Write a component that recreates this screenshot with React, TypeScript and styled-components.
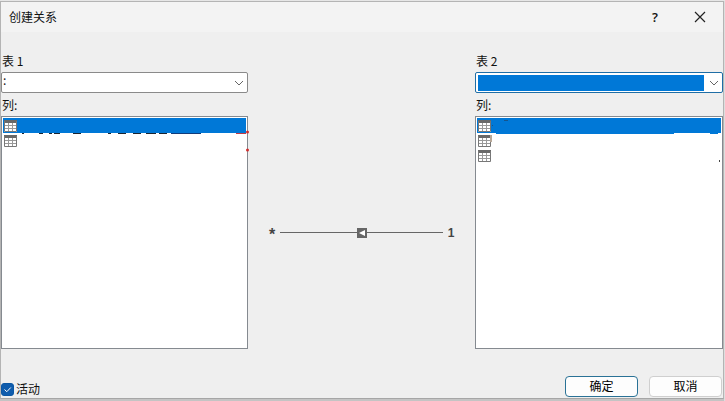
import React, { useState } from "react";
import styled, { createGlobalStyle } from "styled-components";

const GlobalStyle = createGlobalStyle`
  *, *::before, *::after { box-sizing: border-box; }
  body {
    margin: 0;
    background: #c4c4c4;
    color: #111;
    font: 12px/16px "Noto Sans CJK SC", sans-serif;
  }
`;

const Page = styled.div`
  display: flex;
  min-height: 100vh;
  padding: 1px 1px 2px 0;
  background: linear-gradient(#e6e6e6 0 1px, transparent 1px), linear-gradient(to left, #dedede 0 1px, transparent 1px);
`;

const Dialog = styled.form`
  flex: 1;
  display: flex;
  flex-direction: column;
  border: 1px solid #b4b4b4;
  border-bottom-color: #a6a6a6;
  background: #efefef;
`;

const TitleBar = styled.header`
  display: flex;
  align-items: center;
  height: 30px;
  padding: 0 8px;
  background: #f3f3f3;
`;

const Title = styled.h1`
  flex: 1;
  margin: 0;
  font: inherit;
`;

const TitleButton = styled.button`
  display: grid;
  place-items: center;
  width: 30px;
  height: 28px;
  margin-left: 15px;
  padding: 0;
  border: 0;
  background: none;
  color: #111;
  font: 600 13px/16px "Open Sans", sans-serif;
`;

const Columns = styled.main`
  flex: 1;
  display: grid;
  grid-template-columns: minmax(0, 1fr) 226px minmax(0, 1fr);
  padding-top: 20px;
`;

const Side = styled.section`
  display: flex;
  flex-direction: column;
  &:first-child { margin-right: 1px; }
`;

const FieldLabel = styled.label`
  display: block;
  height: 20px;
  padding: 0 1px;
  line-height: 18px;
`;

const ListLabel = styled.div`
  height: 23px;
  padding: 4px 1px 0;
`;

const Combo = styled.div<{ $active?: boolean }>`
  position: relative;
  height: 21px;
  border: 1px solid ${(p) => (p.$active ? "#1f6ea6" : "#8a8a8a")};
  border-radius: 2px;
  background: #fff;
  svg {
    position: absolute;
    right: 3px;
    top: 6px;
    pointer-events: none;
  }
`;

const Select = styled.select<{ $active?: boolean }>`
  display: block;
  appearance: none;
  width: 100%;
  height: 100%;
  padding: ${(p) => (p.$active ? "2px 18px 1px 2px" : "0 18px 5px 1px")};
  border: 0;
  outline: 0;
  border-radius: 2px;
  background: ${(p) => (p.$active ? "#0078d7" : "#fff")} content-box;
  color: #111;
  font: 12px/12px "Noto Sans CJK SC", sans-serif;
`;

const List = styled.ul`
  position: relative;
  flex: 1;
  margin: 0;
  padding: 1px;
  border: 1px solid #858a90;
  background: #fff;
  list-style: none;
`;

const Row = styled.li<{ $selected?: boolean }>`
  display: flex;
  align-items: center;
  height: 15px;
  padding: 1px 1px 0;
  background: ${(p) => (p.$selected ? "#0078d7" : "transparent")};
`;

const Marks = styled.svg`
  position: absolute;
  left: 0;
  top: 0;
  overflow: visible;
  pointer-events: none;
`;

const Relation = styled.div`
  align-self: center;
  display: flex;
  align-items: center;
  gap: 4px;
  margin-top: 64px;
  padding: 0 20px 0 19px;
  color: #444;
  font: bold 12px/16px "Liberation Sans", sans-serif;
`;

const Cardinality = styled.span<{ $many?: boolean }>`
  width: 8px;
  text-align: center;
  font-size: ${(p) => (p.$many ? "16px" : "12px")};
  padding-top: ${(p) => (p.$many ? "5px" : "0")};
`;

const Line = styled.div`
  flex: 1;
  display: flex;
  align-items: center;
  &::before, &::after {
    content: "";
    flex: 1;
    height: 1px;
    background: #666;
  }
`;

const Footer = styled.footer`
  display: flex;
  align-items: flex-end;
  height: 49px;
  padding-bottom: 1px;
`;

const CheckLabel = styled.label`
  flex: 1;
  display: flex;
  align-items: center;
  gap: 2px;
`;

const Check = styled.input`
  appearance: none;
  width: 13px;
  height: 13px;
  margin: 0;
  border: 1px solid #0b57a4;
  border-radius: 3px;
  background: #fff;
  &:checked {
    background: #0f5cad url("data:image/svg+xml,%3Csvg xmlns='http://www.w3.org/2000/svg' viewBox='0 0 11 11'%3E%3Cpath d='M2.5 5.5L4.8 7.7L8.8 3.5' fill='none' stroke='white' stroke-width='1'/%3E%3C/svg%3E") center / 11px 11px no-repeat;
  }
`;

const Button = styled.button<{ $primary?: boolean }>`
  width: 73px;
  height: 21px;
  margin-left: 11px;
  padding: 0 0 2px;
  border: 1px solid ${(p) => (p.$primary ? "#2a7296" : "#cfcfcf")};
  border-radius: 4px;
  background: #fdfdfd;
  color: #000;
  font: inherit;
  &:last-child { margin-right: 1px; }
`;

const Chevron = () => (
  <svg width="10" height="8" viewBox="0 0 10 8" fill="none" stroke="#666">
    <path d="M1 2L5 6L9 2" />
  </svg>
);

const TableIcon = () => (
  <svg width="13" height="12" viewBox="0 0 13 12">
    <path fill="#fff" d="M0 0H13V12H0Z" />
    <path fill="#686868" d="M0 0H13V3H0Z" />
    <path fill="none" stroke="#777" d="M.5 1V11.5H12.5V1" />
    <path fill="none" stroke="#999" d="M4.5 3V11M8.5 3V11M1 5.5H12M1 8.5H12" />
  </svg>
);

function ColumnList({ count, name, children }: { count: number; name: string; children: React.ReactNode }) {
  const [selected, setSelected] = useState(0);
  return (
    <List role="listbox" aria-label={name}>
      {Array.from({ length: count }, (_, i) => (
        <Row key={i} role="option" aria-selected={i === selected} $selected={i === selected} onClick={() => setSelected(i)}>
          <TableIcon />
        </Row>
      ))}
      {children}
    </List>
  );
}

export default function App() {
  return (
    <>
      <GlobalStyle />
      <Page>
        <Dialog onSubmit={(e) => e.preventDefault()}>
          <TitleBar>
            <Title>创建关系</Title>
            <TitleButton type="button">?</TitleButton>
            <TitleButton type="button" aria-label="关闭">
              <svg width="12" height="12" viewBox="0 0 12 12" stroke="#222" strokeWidth="1.2">
                <path d="M1 1L11 11M11 1L1 11" />
              </svg>
            </TitleButton>
          </TitleBar>
          <Columns>
            <Side>
              <FieldLabel htmlFor="table1">表 1</FieldLabel>
              <Combo>
                <Select id="table1">
                  <option>:</option>
                </Select>
                <Chevron />
              </Combo>
              <ListLabel>列:</ListLabel>
              <ColumnList count={2} name="表 1 列">
                <Marks width="246" height="40" viewBox="0 0 246 40">
                  <path stroke="#1c2530" d="M20 16.5h2M37 16.5h4M47 16.5h3M52 16.5h6M71 16.5h8M106 16.5h3M116 16.5h8M131 16.5h8M144 16.5h10M157 16.5h8" />
                  <path stroke="#123c7a" d="M169 16.5h30" />
                  <path stroke="#c03a45" d="M234 16.5h10" />
                  <circle cx="245.5" cy="15" r="1.5" fill="#d12d2d" />
                  <circle cx="245.5" cy="33" r="1.5" fill="#d12d2d" />
                </Marks>
              </ColumnList>
            </Side>
            <Relation>
              <Cardinality $many>*</Cardinality>
              <Line>
                <svg width="10" height="10" viewBox="0 0 10 10">
                  <path fill="#666" d="M0 0H10V10H0Z" />
                  <path fill="#fff" d="M8 2V8L2 5Z" />
                </svg>
              </Line>
              <Cardinality>1</Cardinality>
            </Relation>
            <Side>
              <FieldLabel htmlFor="table2">表 2</FieldLabel>
              <Combo $active>
                <Select id="table2" $active>
                  <option></option>
                </Select>
                <Chevron />
              </Combo>
              <ListLabel>列:</ListLabel>
              <ColumnList count={3} name="表 2 列">
                <Marks width="246" height="50" viewBox="0 0 246 50">
                  <path stroke="#0078d7" d="M20 16.5H198M234 16.5h8" />
                  <path stroke="#15558d" d="M16 8.5h1M28 3.5h4" />
                  <path stroke="#b8a898" strokeWidth="2" d="M15 18v7" />
                  <path stroke="#444" d="M243.5 43v2" />
                </Marks>
              </ColumnList>
            </Side>
          </Columns>
          <Footer>
            <CheckLabel>
              <Check type="checkbox" defaultChecked />
              活动
            </CheckLabel>
            <Button type="submit" $primary>确定</Button>
            <Button type="button">取消</Button>
          </Footer>
        </Dialog>
      </Page>
    </>
  );
}
